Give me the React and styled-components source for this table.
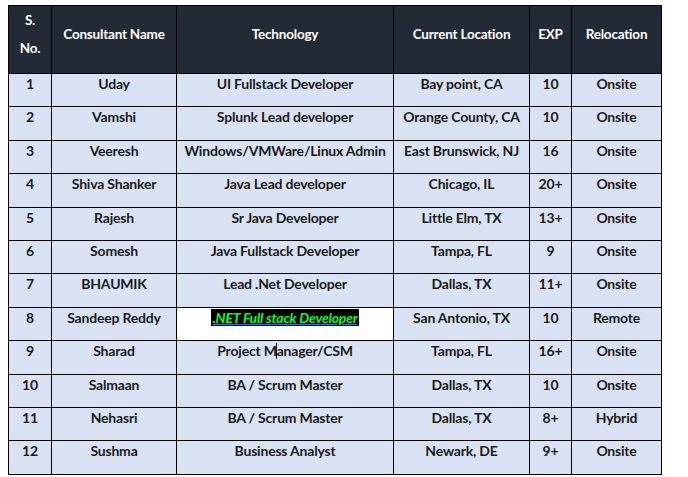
import React from 'react';
import styled, { createGlobalStyle } from 'styled-components';

const GlobalStyle = createGlobalStyle`
  body {
    margin: 0;
    background: #ffffff;
    font-family: Lato, "Liberation Sans", sans-serif;
  }
`;

const Page = styled.div`
  padding: 5px 0 0 8px;
`;

const Table = styled.table`
  border-collapse: collapse;
  table-layout: fixed;
  width: 654px;
  font-weight: 700;
  font-size: 14px;
  color: #1a1a1a;
`;

const HeadCell = styled.th`
  background: #222a35;
  color: #ffffff;
  border: 1px solid #000;
  height: 55px;
  padding: 0 2px 11px;
  line-height: 28px;
  vertical-align: middle;
  font-weight: 700;
  font-size: 13.5px;
  letter-spacing: -0.2px;
`;

const Cell = styled.td`
  background: ${props => props.white ? '#ffffff' : '#d9e2f3'};
  border: 1px solid #000;
  height: 32.4px;
  padding: 0 2px;
  line-height: 20px;
  vertical-align: top;
  text-align: center;
  white-space: nowrap;
  letter-spacing: -0.2px;
`;

const Highlight = styled.span`
  background: #000;
  color: #00ff33;
  font-style: italic;
  text-decoration: underline;
  text-decoration-color: #2f6fe0;
  padding: 0 1px;
`;

const Caret = styled.span`
  display: inline-block;
  width: 1px;
  height: 16px;
  background: #000;
  vertical-align: -3px;
  margin: 0 -0.5px;
`;

const columns = [43, 125, 217, 136, 42, 90];

const rows = [
  ['1', 'Uday', 'UI Fullstack Developer', 'Bay point, CA', '10', 'Onsite'],
  ['2', 'Vamshi', 'Splunk Lead developer', 'Orange County, CA', '10', 'Onsite'],
  ['3', 'Veeresh', 'Windows/VMWare/Linux Admin', 'East Brunswick, NJ', '16', 'Onsite'],
  ['4', 'Shiva Shanker', 'Java Lead developer', 'Chicago, IL', '20+', 'Onsite'],
  ['5', 'Rajesh', 'Sr Java Developer', 'Little Elm, TX', '13+', 'Onsite'],
  ['6', 'Somesh', 'Java Fullstack Developer', 'Tampa, FL', '9', 'Onsite'],
  ['7', 'BHAUMIK', 'Lead .Net Developer', 'Dallas, TX', '11+', 'Onsite'],
  ['8', 'Sandeep Reddy', 'highlight', 'San Antonio, TX', '10', 'Remote'],
  ['9', 'Sharad', 'caret', 'Tampa, FL', '16+', 'Onsite'],
  ['10', 'Salmaan', 'BA / Scrum Master', 'Dallas, TX', '10', 'Onsite'],
  ['11', 'Nehasri', 'BA / Scrum Master', 'Dallas, TX', '8+', 'Hybrid'],
  ['12', 'Sushma', 'Business Analyst', 'Newark, DE', '9+', 'Onsite'],
];

const renderTech = (tech) => {
  if (tech === 'highlight') return <Highlight>.NET Full stack Developer</Highlight>;
  if (tech === 'caret') return <>Project M<Caret />anager/CSM</>;
  return tech;
};

export default function App() {
  return (
    <Page>
      <GlobalStyle />
      <Table>
        <colgroup>
          {columns.map((w, i) => <col key={i} style={{ width: w }} />)}
        </colgroup>
        <thead>
          <tr>
            <HeadCell>S.<br />No.</HeadCell>
            <HeadCell>Consultant Name</HeadCell>
            <HeadCell>Technology</HeadCell>
            <HeadCell>Current Location</HeadCell>
            <HeadCell>EXP</HeadCell>
            <HeadCell>Relocation</HeadCell>
          </tr>
        </thead>
        <tbody>
          {rows.map(row => (
            <tr key={row[0]}>
              <Cell>{row[0]}</Cell>
              <Cell>{row[1]}</Cell>
              <Cell white={row[2] === 'highlight'}>{renderTech(row[2])}</Cell>
              <Cell>{row[3]}</Cell>
              <Cell>{row[4]}</Cell>
              <Cell>{row[5]}</Cell>
            </tr>
          ))}
        </tbody>
      </Table>
    </Page>
  );
}
